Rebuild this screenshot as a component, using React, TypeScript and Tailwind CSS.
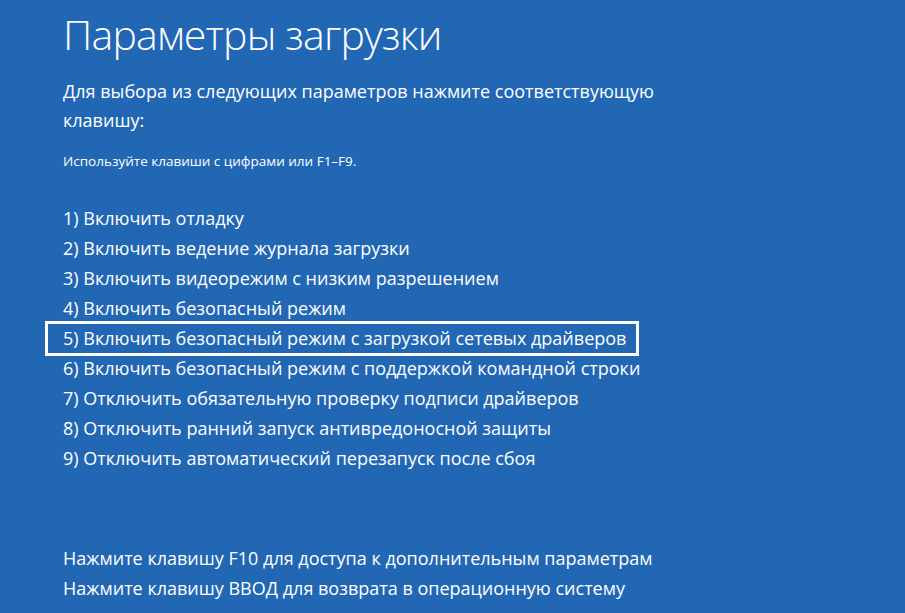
const items = [
  "1) Включить отладку",
  "2) Включить ведение журнала загрузки",
  "3) Включить видеорежим с низким разрешением",
  "4) Включить безопасный режим",
  "5) Включить безопасный режим с загрузкой сетевых драйверов",
  "6) Включить безопасный режим с поддержкой командной строки",
  "7) Отключить обязательную проверку подписи драйверов",
  "8) Отключить ранний запуск антивредоносной защиты",
  "9) Отключить автоматический перезапуск после сбоя",
];

export default function App() {
  return (
    <div className="h-[613px] w-[905px] overflow-hidden bg-[#2267b4] text-white font-['Open_Sans','Noto_Sans',sans-serif]">
      <div className="pl-[63px] pt-[6px]">
        <h1 className="text-[41px] font-light leading-[56px] tracking-[-0.8px]">Параметры загрузки</h1>
        <p className="mt-[15px] w-[620px] text-[18px] leading-[29px]">
          Для выбора из следующих параметров нажмите соответствующую клавишу:
        </p>
        <p className="mt-[16px] text-[13.5px] leading-[20px]">Используйте клавиши с цифрами или F1–F9.</p>
        <ul className="mt-[32px]">
          {items.map((item, i) => (
            <li
              key={item}
              className={
                i === 4
                  ? "-mt-[2px] -mb-[3px] -ml-[18px] w-[594px] border-[3px] border-white pl-[15px] text-[18px] leading-[29px]"
                  : "text-[18px] leading-[30px]"
              }
            >
              {item}
            </li>
          ))}
        </ul>
        <div className="mt-[70px] text-[18px] leading-[30px]">
          <p>Нажмите клавишу F10 для доступа к дополнительным параметрам</p>
          <p>Нажмите клавишу ВВОД для возврата в операционную систему</p>
        </div>
      </div>
    </div>
  );
}
